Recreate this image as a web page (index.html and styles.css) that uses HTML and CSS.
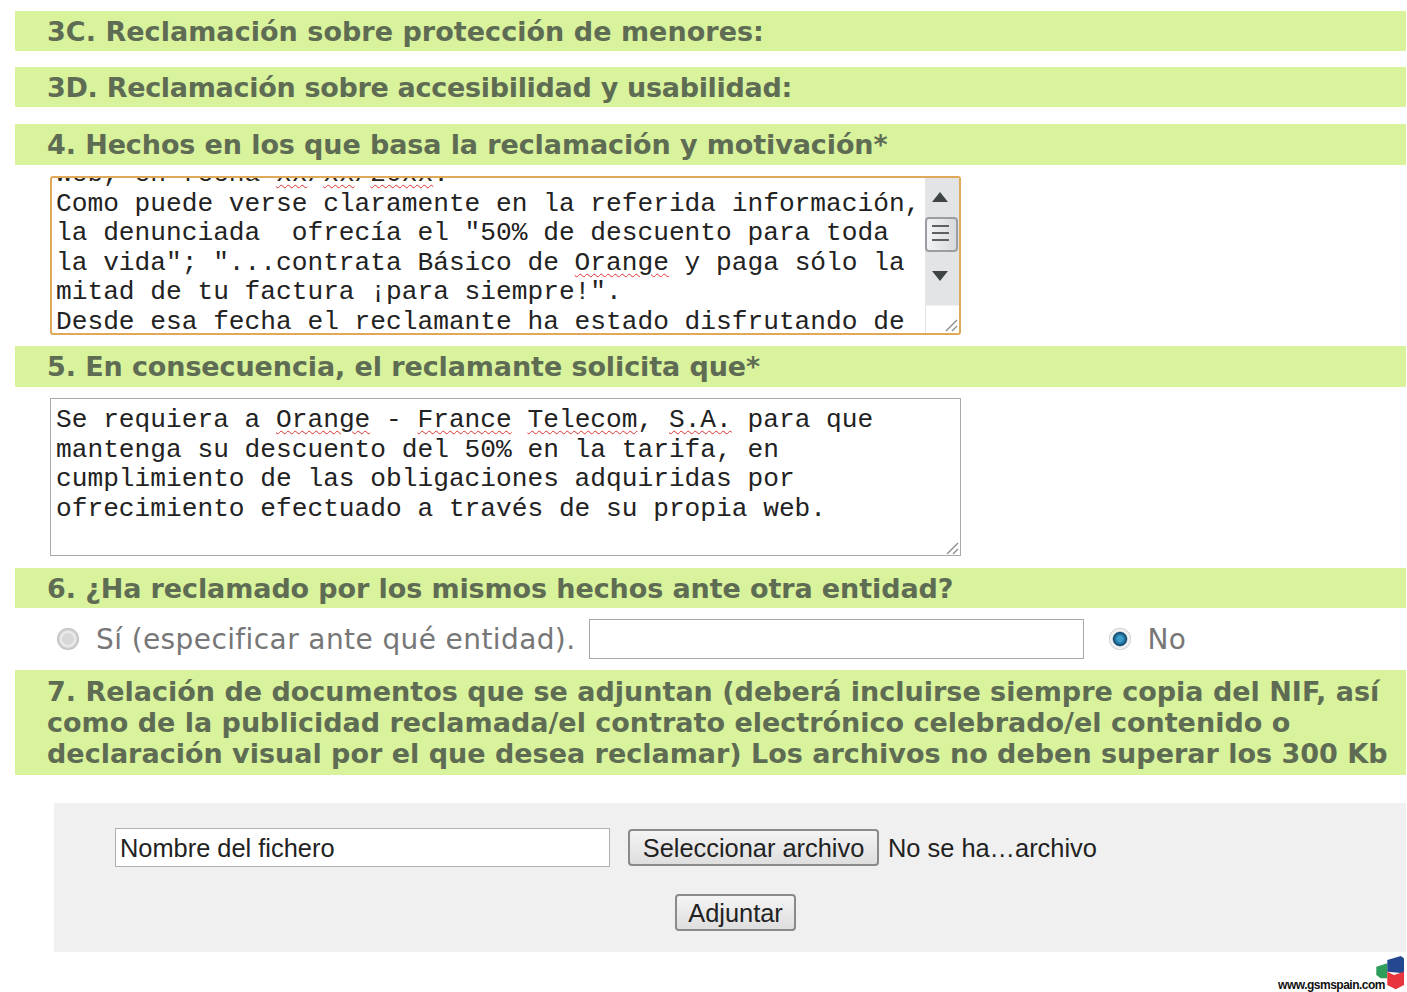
FILE: index.html
```html
<!DOCTYPE html>
<html lang="es">
<head>
<meta charset="utf-8">
<title>Reclamación</title>
<link rel="stylesheet" href="styles.css">
</head>
<body>
<h2 class="bar bar-3c gap-16">3C. Reclamación sobre protección de menores:</h2>
<h2 class="bar bar-3d gap-17">3D. Reclamación sobre accesibilidad y usabilidad:</h2>
<h2 class="bar bar-tall gap-11">4. Hechos en los que basa la reclamación y motivación*</h2>
<div class="area area-focus">
<div class="area-text area-scrolled"><div class="clip-line">web, en fecha <span class="sp">xx</span>/<span class="sp">xx</span>/<span class="sp">20xx</span>:</div>Como puede verse claramente en la referida información,
la denunciada  ofrecía el "50% de descuento para toda
la vida"; "...contrata Básico de <span class="sp">Orange</span> y paga sólo la
mitad de tu factura ¡para siempre!".
Desde esa fecha el reclamante ha estado disfrutando de</div>
<div class="scroll">
<svg class="scroll-svg" width="34" height="156" viewBox="0 0 34 156">
<defs><linearGradient id="thumb" x1="0" x2="1" y1="0" y2="0"><stop offset="0" stop-color="#f4f5f6"/><stop offset="1" stop-color="#d6d8da"/></linearGradient></defs>
<rect x="0" y="0" width="34" height="127" fill="#e3e4e6"/>
<path d="M7 24 L15 14 L23 24 Z" fill="#3f4546"/>
<rect x="1" y="40" width="31" height="33" rx="3" fill="url(#thumb)" stroke="#9a9ea2" stroke-width="2"/>
<path d="M7 48 H24 M7 55 H24 M7 62 H24" stroke="#5c6064" stroke-width="2"/>
<path d="M7 93 L23 93 L15 103 Z" fill="#3f4546"/>
<path d="M1 127 H34 M0.5 127 V156" stroke="#e4e4e4" stroke-width="1" fill="none"/>
<path d="M21 153 L32 142 M27 153 L32 148" stroke="#888" stroke-width="1.3"/>
</svg>
</div>
</div>
<h2 class="bar bar-tall gap-11">5. En consecuencia, el reclamante solicita que*</h2>
<div class="area area-plain">
<div class="area-text">Se requiera a <span class="sp">Orange</span> - <span class="sp">France</span> <span class="sp">Telecom</span>, <span class="sp">S.A.</span> para que
mantenga su descuento del 50% en la tarifa, en
cumplimiento de las obligaciones adquiridas por
ofrecimiento efectuado a través de su propia web.</div>
<svg class="grip" width="16" height="16" viewBox="0 0 16 16"><path d="M3 15 L14 4 M9 15 L14 10" stroke="#888" stroke-width="1.3"/></svg>
</div>
<h2 class="bar gap-11">6. ¿Ha reclamado por los mismos hechos ante otra entidad?</h2>
<div class="choice">
<span class="radio radio-off"></span>
<span class="choice-label">Sí (especificar ante qué entidad).</span>
<span class="choice-input"></span>
<span class="radio radio-on"></span>
<span class="choice-label">No</span>
</div>
<h2 class="bar bar-multi">7. Relación de documentos que se adjuntan (deberá incluirse siempre copia del NIF, así<br>como de la publicidad reclamada/el contrato electrónico celebrado/el contenido o<br>declaración visual por el que desea reclamar) Los archivos no deben superar los 300 Kb</h2>
<section class="upload">
<div class="upload-row">
<span class="file-name">Nombre del fichero</span>
<button class="btn btn-file" type="button">Seleccionar archivo</button>
<span class="file-status">No se ha…archivo</span>
</div>
<div class="upload-submit">
<button class="btn btn-send" type="button">Adjuntar</button>
</div>
</section>
<div class="mark">
<span class="mark-text">www.gsmspain.com</span>
<svg class="mark-logo" width="30" height="36" viewBox="0 0 30 36">
<path d="M0.3 12.7 L11.3 9.3 V24.3 H4.7 L0.3 21 Z" fill="#2f9e5b"/>
<path d="M11.3 6 L24.7 2 L28 4.3 V19.3 L11.3 17.7 Z" fill="#24488f"/>
<path d="M11.3 17.7 L18 21 L28 17.7 V31 L19.7 35.3 L11.3 31 Z" fill="#e8343c"/>
</svg>
</div>
</body>
</html>
```

FILE: styles.css
```css
* { box-sizing: border-box; }
html, body { margin: 0; padding: 0; background: #fff; }
body {
  position: relative;
  height: 992px;
  padding: 11px 1px 0 15px;
  overflow: hidden;
  font-family: "DejaVu Sans", Verdana, sans-serif;
}
.bar {
  margin: 0;
  height: 40px;
  padding: 1px 0 0 32px;
  background: #d9f29c;
  color: #5f6c54;
  font-family: "DejaVu Sans", Verdana, sans-serif;
  font-size: 27px;
  font-weight: 700;
  line-height: 40px;
  letter-spacing: -0.1px;
  white-space: nowrap;
}
.bar-3c { letter-spacing: 0.04px; }
.bar-3d { letter-spacing: -0.3px; }
.bar-tall { height: 41px; }
.gap-16 { margin-bottom: 16px; }
.gap-17 { margin-bottom: 17px; }
.gap-11 { margin-bottom: 11px; }
.bar-multi {
  height: 105px;
  padding-top: 6px;
  line-height: 31px;
  letter-spacing: 0;
}
.area {
  position: relative;
  display: flex;
  width: 911px;
  margin-left: 35px;
  background: #fff;
  overflow: hidden;
}
.area-focus {
  height: 159px;
  margin-bottom: 11px;
  border: 2px solid #e0a95a;
  border-radius: 3px;
}
.area-plain {
  height: 158px;
  margin-bottom: 12px;
  border: 1px solid #a9acaf;
}
.area-text {
  flex: 1;
  padding: 7px 0 0 5px;
  color: #222;
  font-family: "Liberation Mono", "Courier New", monospace;
  font-size: 26.2px;
  line-height: 29.6px;
  white-space: pre;
}
.area-scrolled { padding: 0 0 0 4px; margin-top: -18px; }
.sp {
  text-decoration: underline wavy #e03030 1px;
  text-underline-offset: 3px;
}
.scroll { width: 34px; flex: none; }
.scroll-svg { display: block; }
.grip { position: absolute; right: 0; bottom: 0; }
.choice {
  display: flex;
  align-items: center;
  height: 40px;
  margin: 11px 0;
  padding-left: 42px;
  color: #777;
  font-family: "DejaVu Sans", Verdana, sans-serif;
  font-size: 28px;
}
.choice-label { letter-spacing: 0.4px; }
.radio {
  flex: none;
  width: 22px;
  height: 22px;
  margin-right: 17px;
  border-radius: 50%;
}
.radio-off {
  background: radial-gradient(circle, #d8d8d8 0 35%, #f0f0f0 45%, #c4c4c4 65%, #a0a0a0 100%);
}
.radio-on {
  margin-left: 25px;
  margin-right: 16px;
  background: radial-gradient(circle, #3a9cc8 0 18%, #0f4a72 42%, #f0f0f0 50% 62%, #9a9a9a 78%, #8a8a8a 100%);
}
.choice-input {
  flex: none;
  width: 495px;
  height: 40px;
  margin-left: 14px;
  border: 1px solid #a9a9a9;
  background: #fff;
}
.upload {
  margin: 28px 0 0 39px;
  height: 149px;
  padding: 25px 0 0 61px;
  background: #f0f0f0;
}
.upload-row {
  display: flex;
  align-items: center;
  height: 39px;
  font-family: "Liberation Sans", Arial, sans-serif;
  font-size: 25.4px;
  color: #222;
}
.file-name {
  flex: none;
  width: 495px;
  height: 39px;
  padding-left: 4px;
  border: 1px solid #b0b0b0;
  background: #fff;
  line-height: 38px;
}
.btn {
  border: 2px solid #8a8a8a;
  border-radius: 4px;
  background: linear-gradient(#f4f4f4, #dedede);
  color: #222;
  font-family: "Liberation Sans", Arial, sans-serif;
  font-size: 25.4px;
  padding: 1px 0 0;
}
.btn-file { flex: none; width: 251px; height: 37px; margin-left: 18px; }
.file-status { margin-left: 9px; padding-top: 1px; }
.upload-submit {
  display: flex;
  margin: 27px 0 0 560px;
}
.btn-send { width: 121px; height: 37px; }
.mark {
  position: absolute;
  right: 1px;
  bottom: 0;
  display: flex;
  align-items: flex-end;
}
.mark-text {
  margin-right: -9px;
  color: #111;
  font-family: "Liberation Sans", Arial, sans-serif;
  font-size: 12px;
  font-weight: 700;
  letter-spacing: -0.5px;
}
.mark-logo { display: block; margin-bottom: 2px; }
```
